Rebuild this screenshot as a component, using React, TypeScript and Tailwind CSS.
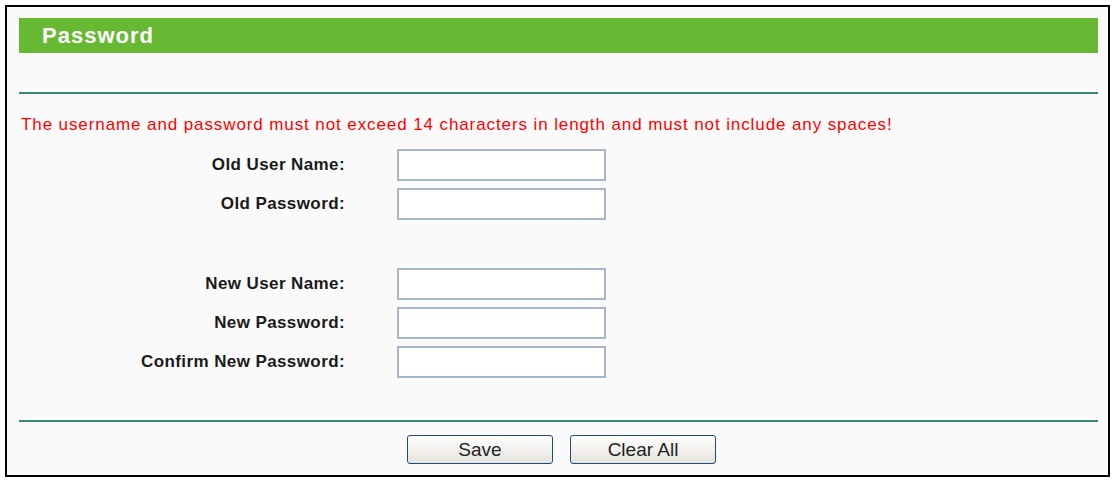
import { useState } from 'react';

const font = "font-['Liberation_Sans',Arial,sans-serif]";

interface FieldProps {
    label: string;
    type?: string;
    value: string;
    onChange: (v: string) => void;
    className?: string;
}

function Field({ label, type = 'text', value, onChange, className = '' }: FieldProps) {
    return (
        <div className={`flex items-center ${className}`}>
            <label className="w-[327px] pr-[1px] text-right text-[17px] font-bold tracking-[0.4px] text-[#1a1a1a]">
                {label}
            </label>
            <input
                type={type}
                value={value}
                maxLength={14}
                onChange={(e) => onChange(e.target.value)}
                className="ml-[51px] h-[32px] w-[209px] border-2 border-[#a9b6c5] bg-white px-1 text-[15px] outline-none"
            />
        </div>
    );
}

export default function App() {
    const [oldUser, setOldUser] = useState('');
    const [oldPass, setOldPass] = useState('');
    const [newUser, setNewUser] = useState('');
    const [newPass, setNewPass] = useState('');
    const [confirmPass, setConfirmPass] = useState('');

    const clearAll = () => {
        setOldUser('');
        setOldPass('');
        setNewUser('');
        setNewPass('');
        setConfirmPass('');
    };

    return (
        <div className={`min-h-[481px] bg-white pl-[5px] pt-[5px] ${font}`}>
            <div className="w-[1105px] border-2 border-black bg-[#fafafa] pb-[11px] pl-[12px] pr-[10px] pt-[11px]">
                {/* Title bar */}
                <div className="flex h-[35px] items-center bg-[#67b934] pl-[23px]">
                    <span className="text-[22px] font-bold tracking-[1px] text-white">Password</span>
                </div>

                <div className="mt-[39px] h-[2px] bg-[#3a8a69]" />

                <p className="mt-[21px] h-[20px] pl-[2px] text-[17px] leading-[20px] tracking-[0.9px] text-[#ff0000]">
                    The username and password must not exceed 14 characters in length and must not include any spaces!
                </p>

                <Field label="Old User Name:" value={oldUser} onChange={setOldUser} className="mt-[14px]" />
                <Field label="Old Password:" type="password" value={oldPass} onChange={setOldPass} className="mt-[7px]" />

                <Field label="New User Name:" value={newUser} onChange={setNewUser} className="mt-[48px]" />
                <Field label="New Password:" type="password" value={newPass} onChange={setNewPass} className="mt-[7px]" />
                <Field label="Confirm New Password:" type="password" value={confirmPass} onChange={setConfirmPass} className="mt-[7px]" />

                <div className="mt-[42px] h-[2px] bg-[#3a8a69]" />

                <div className="mt-[13px] flex justify-center gap-[17px] pl-[6px]">
                    <button
                        type="button"
                        className="h-[29px] w-[146px] rounded-[3px] border border-[#1c4a7a] bg-linear-to-b from-white to-[#e4e3dc] text-[19px] text-[#222]"
                    >
                        Save
                    </button>
                    <button
                        type="button"
                        onClick={clearAll}
                        className="h-[29px] w-[146px] rounded-[3px] border border-[#1c4a7a] bg-linear-to-b from-white to-[#e4e3dc] text-[19px] text-[#222]"
                    >
                        Clear All
                    </button>
                </div>
            </div>
        </div>
    );
}
